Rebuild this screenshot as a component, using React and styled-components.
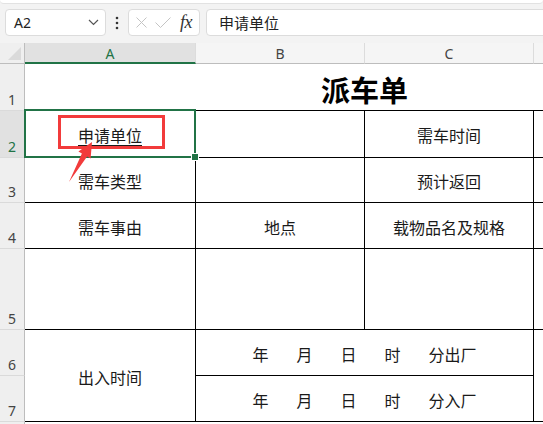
import React from 'react';
import styled, { createGlobalStyle } from 'styled-components';

const GlobalStyle = createGlobalStyle`
  html, body { margin: 0; padding: 0; background: #fff; }
  body { font-family: "Noto Sans", "Noto Sans CJK SC", sans-serif; }
`;

const Page = styled.div`
  width: 543px;
  height: 424px;
  overflow: hidden;
  background: #f3f3f3;
  position: relative;
`;

const Toolbar = styled.div`
  height: 43px;
  display: flex;
  flex-direction: column;
  background: #f3f3f3;
`;

const RibbonEdge = styled.div`
  height: 3px;
  background: #fff;
  border-bottom: 1px solid #e2e2e2;
  border-radius: 0 0 6px 6px;
`;

const FormulaRow = styled.div`
  display: flex;
  align-items: center;
  padding: 5px 0 0 5px;
  width: 560px;
`;

const Box = styled.div`
  height: 27px;
  box-sizing: border-box;
  background: #fff;
  border: 1px solid #dcdcdc;
  border-radius: 4px;
  display: flex;
  align-items: center;
`;

const NameBox = styled(Box)`
  width: 101px;
  padding: 0 6px 0 8px;
  justify-content: space-between;
  font-size: 14px;
  color: #222;
`;

const Dots = styled.div`
  width: 22px;
  display: flex;
  justify-content: center;
`;

const FxBox = styled(Box)`
  width: 72px;
  padding: 0 4px 0 7px;
  gap: 8px;
`;

const Fx = styled.span`
  font-family: "Liberation Serif", serif;
  font-style: italic;
  font-size: 18px;
  color: #333;
  margin-left: 1px;
  letter-spacing: -0.5px;
`;

const FormulaInput = styled(Box)`
  flex: 1;
  margin-left: 6px;
  padding-left: 12px;
  font-family: "Noto Sans CJK SC", sans-serif;
  font-size: 15px;
  color: #222;
`;

const Sheet = styled.div`
  display: grid;
  grid-template-columns: 25px 171px 169px 169px 170px;
  grid-template-rows: 21px 47px 47px 45px 46px 81px 46px 46px 30px;
  width: 704px;
  background: #fff;
`;

const Corner = styled.div`
  background: #efefef;
  border-right: 1px solid #bdbdbd;
  border-bottom: 1px solid #bdbdbd;
  position: relative;
  &::after {
    content: "";
    position: absolute;
    right: 3px;
    bottom: 3px;
    border-style: solid;
    border-width: 0 0 13px 13px;
    border-color: transparent transparent #dadada transparent;
  }
`;

const ColHead = styled.div`
  background: ${(p) => (p.$active ? '#e1e1e1' : '#f5f5f5')};
  border-right: 1px solid #dcdcdc;
  border-bottom: ${(p) => (p.$active ? '2px solid #217346' : '1px solid #bdbdbd')};
  color: ${(p) => (p.$active ? '#217346' : '#444')};
  font-size: 14px;
  display: flex;
  align-items: center;
  justify-content: center;
  padding-top: 1px;
`;

const RowHead = styled.div`
  background: ${(p) => (p.$active ? '#e1e1e1' : '#efefef')};
  color: ${(p) => (p.$active ? '#217346' : '#444')};
  border-right: 1px solid #bdbdbd;
  border-bottom: 1px solid #dadada;
  font-size: 14px;
  display: flex;
  align-items: flex-end;
  justify-content: center;
  padding-bottom: 1px;
  grid-column: 1;
`;

const Cell = styled.div`
  background: #fff;
  border-right: ${(p) => (p.$r ? '1px solid #000' : 'none')};
  border-bottom: ${(p) => (p.$b ? '1px solid #000' : 'none')};
  grid-column: ${(p) => p.$col || 'auto'};
  grid-row: ${(p) => p.$row || 'auto'};
  display: flex;
  align-items: center;
  justify-content: center;
  padding-top: 2px;
  font-family: "Noto Sans CJK SC", sans-serif;
  font-size: 16px;
  color: #1a1a1a;
  position: relative;
  white-space: nowrap;
`;

const Title = styled(Cell)`
  font-size: 29px;
  font-weight: 700;
  color: #000;
  padding-top: 3px;
`;

const Underlined = styled.span`
  text-decoration: underline;
  text-underline-offset: 3px;
  text-decoration-thickness: 1px;
`;

const DateLine = styled.div`
  display: flex;
  gap: 28px;
`;

const Selection = styled.div`
  position: absolute;
  top: -2px;
  left: -1px;
  right: -1px;
  bottom: -1px;
  border: 2px solid #217346;
  pointer-events: none;
  z-index: 2;
`;

const Handle = styled.div`
  position: absolute;
  right: -5px;
  bottom: -5px;
  width: 6px;
  height: 6px;
  background: #217346;
  border: 1px solid #fff;
`;

const RedBox = styled.div`
  position: absolute;
  left: 33px;
  top: 4px;
  width: 107px;
  height: 34px;
  box-sizing: border-box;
  border: 3px solid #f23b3b;
  z-index: 3;
`;

const Arrow = styled.svg`
  position: absolute;
  left: 35px;
  top: 24px;
  z-index: 3;
  overflow: visible;
`;

export default function App() {
  return (
    <>
      <GlobalStyle />
      <Page>
        <Toolbar>
          <RibbonEdge />
          <FormulaRow>
            <NameBox>
              <span>A2</span>
              <svg width="11" height="7" viewBox="0 0 11 7">
                <path d="M1 1 L5.5 5.5 L10 1" fill="none" stroke="#555" strokeWidth="1.2" />
              </svg>
            </NameBox>
            <Dots>
              <svg width="4" height="14" viewBox="0 0 4 14">
                <circle cx="2" cy="2" r="1.3" fill="#333" />
                <circle cx="2" cy="7" r="1.3" fill="#333" />
                <circle cx="2" cy="12" r="1.3" fill="#333" />
              </svg>
            </Dots>
            <FxBox>
              <svg width="11" height="11" viewBox="0 0 11 11">
                <path d="M0.5 0.5 L10.5 10.5 M10.5 0.5 L0.5 10.5" stroke="#c4c4c4" strokeWidth="1" />
              </svg>
              <svg width="16" height="11" viewBox="0 0 16 11">
                <path d="M0.5 5.5 L5.5 10.5 L15.5 0.5" fill="none" stroke="#c4c4c4" strokeWidth="1" />
              </svg>
              <Fx>fx</Fx>
            </FxBox>
            <FormulaInput>申请单位</FormulaInput>
          </FormulaRow>
        </Toolbar>
        <Sheet>
          <Corner />
          <ColHead $active>A</ColHead>
          <ColHead>B</ColHead>
          <ColHead>C</ColHead>
          <ColHead />

          <RowHead>1</RowHead>
          <Title $b $col="2 / 6">派车单</Title>

          <RowHead $active>2</RowHead>
          <Cell $r $b>
            <Underlined>申请单位</Underlined>
            <Selection>
              <Handle />
            </Selection>
            <RedBox />
            <Arrow width="40" height="55" viewBox="0 0 40 55">
              <polygon
                points="32,7 30.6,23.5 27.1,21.5 9,47 21.9,18.5 18.4,16.5"
                fill="#f23b3b"
              />
            </Arrow>
          </Cell>
          <Cell $r $b />
          <Cell $r $b>需车时间</Cell>
          <Cell $b />

          <RowHead>3</RowHead>
          <Cell $r $b>需车类型</Cell>
          <Cell $r $b />
          <Cell $r $b>预计返回</Cell>
          <Cell $b />

          <RowHead>4</RowHead>
          <Cell $r $b>需车事由</Cell>
          <Cell $r $b>地点</Cell>
          <Cell $r $b>载物品名及规格</Cell>
          <Cell $b />

          <RowHead>5</RowHead>
          <Cell $r $b />
          <Cell $r $b />
          <Cell $r $b />
          <Cell $b />

          <RowHead>6</RowHead>
          <Cell $r $b $col="2" $row="span 2">出入时间</Cell>
          <Cell $r $b $col="3 / 5">
            <DateLine>
              <span>年</span>
              <span>月</span>
              <span>日</span>
              <span>时</span>
              <span>分出厂</span>
            </DateLine>
          </Cell>
          <Cell $b $col="5" $row="span 2" />

          <RowHead>7</RowHead>
          <Cell $r $b $col="3 / 5">
            <DateLine>
              <span>年</span>
              <span>月</span>
              <span>日</span>
              <span>时</span>
              <span>分入厂</span>
            </DateLine>
          </Cell>

          <RowHead />
          <Cell $col="2 / 6" />
        </Sheet>
      </Page>
    </>
  );
}
